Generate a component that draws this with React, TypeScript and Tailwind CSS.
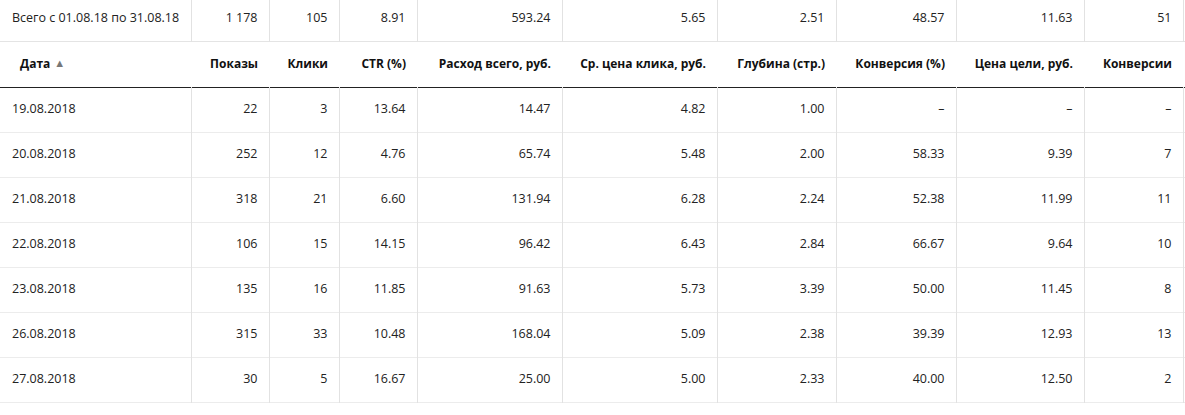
import React from "react";

const widths = [191, 78, 70, 78, 145, 155, 119, 120, 128, 99];

const headers = [
  "Дата",
  "Показы",
  "Клики",
  "CTR (%)",
  "Расход всего, руб.",
  "Ср. цена клика, руб.",
  "Глубина (стр.)",
  "Конверсия (%)",
  "Цена цели, руб.",
  "Конверсии",
];

const total = ["Всего с 01.08.18 по 31.08.18", "1 178", "105", "8.91", "593.24", "5.65", "2.51", "48.57", "11.63", "51"];

const rows: string[][] = [
  ["19.08.2018", "22", "3", "13.64", "14.47", "4.82", "1.00", "–", "–", "–"],
  ["20.08.2018", "252", "12", "4.76", "65.74", "5.48", "2.00", "58.33", "9.39", "7"],
  ["21.08.2018", "318", "21", "6.60", "131.94", "6.28", "2.24", "52.38", "11.99", "11"],
  ["22.08.2018", "106", "15", "14.15", "96.42", "6.43", "2.84", "66.67", "9.64", "10"],
  ["23.08.2018", "135", "16", "11.85", "91.63", "5.73", "3.39", "50.00", "11.45", "8"],
  ["26.08.2018", "315", "33", "10.48", "168.04", "5.09", "2.38", "39.39", "12.93", "13"],
  ["27.08.2018", "30", "5", "16.67", "25.00", "5.00", "2.33", "40.00", "12.50", "2"],
];

function DataRow({ cells, top }: { cells: string[]; top?: boolean }) {
  return (
    <tr className={top ? "h-[45px] border-b border-[#e4e4e4]" : "h-[45px] border-b border-[#ececec]"}>
      {cells.map((c, i) => (
        <td
          key={i}
          className={
            "border-r border-[#e2e2e2] px-[11px] align-middle whitespace-nowrap " +
            (i === 0 ? "text-left pl-[12px]" : "text-right")
          }
        >
          {c}
        </td>
      ))}
    </tr>
  );
}

export default function App() {
  return (
    <div className="w-[1185px] h-[415px] overflow-hidden bg-white">
      <table
        className="-mt-[4px] table-fixed border-collapse text-[12.5px] text-[#222]"
        style={{ fontFamily: '"Open Sans", "Noto Sans", sans-serif', width: 1184 }}
      >
        <colgroup>
          {widths.map((w, i) => (
            <col key={i} style={{ width: w }} />
          ))}
          <col style={{ width: 1 }} />
        </colgroup>
        <tbody>
          <DataRow cells={total} top />
          <tr className="h-[46px] border-b border-[#222]">
            {headers.map((h, i) => (
              <td
                key={i}
                className={
                  "px-[11px] align-middle whitespace-nowrap font-bold text-[12px] text-[#111] " +
                  (i === 0 ? "text-left pl-[20px]" : "text-right")
                }
              >
                {h}
                {i === 0 && <span className="ml-[4px] text-[11px] text-[#777] relative -top-[1px]">▲</span>}
              </td>
            ))}
          </tr>
          {rows.map((r, i) => (
            <DataRow key={i} cells={r} />
          ))}
        </tbody>
      </table>
    </div>
  );
}
